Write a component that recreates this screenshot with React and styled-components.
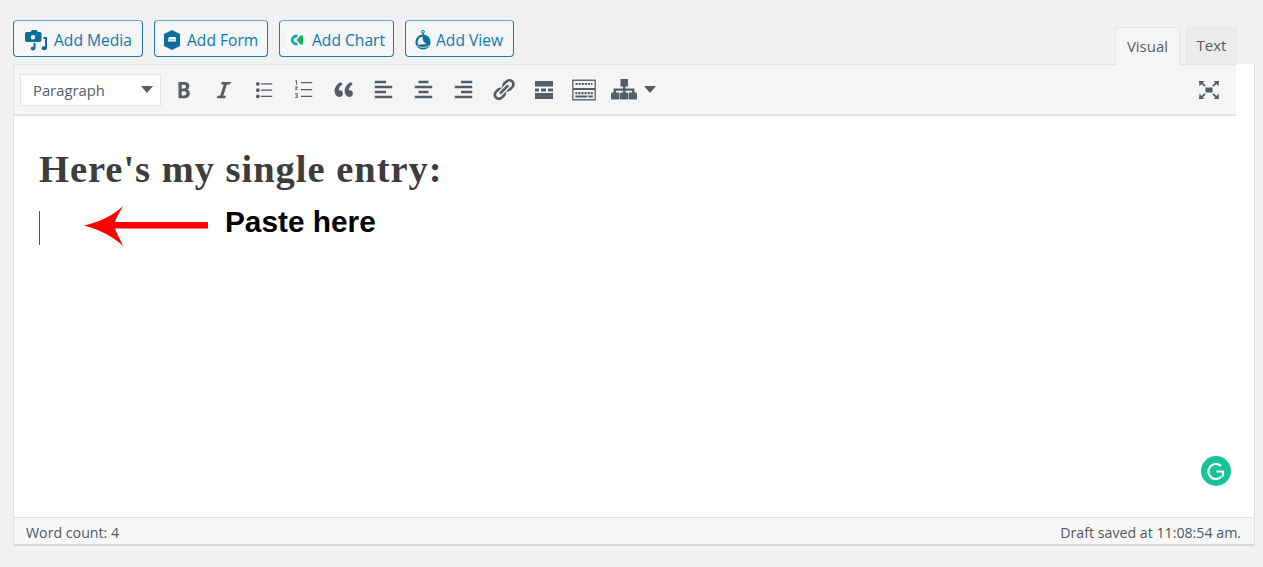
import React from "react";
import styled, { createGlobalStyle } from "styled-components";

const Global = createGlobalStyle`
  html, body { margin: 0; padding: 0; background: #f1f1f1; }
  body { font-family: "Open Sans", "Liberation Sans", sans-serif; overflow: hidden; }
`;

const Page = styled.div`
  box-sizing: border-box;
  height: 567px;
  padding: 20px 8px 0 13px;
  background: #f1f1f1;
`;

const TopRow = styled.div`
  display: flex;
  justify-content: space-between;
  align-items: flex-start;
  height: 44px;
`;

const MediaButtons = styled.div`
  display: flex;
  gap: 11px;
`;

const MediaButton = styled.button`
  box-sizing: border-box;
  display: flex;
  align-items: center;
  gap: ${(p) => p.$gap}px;
  width: ${(p) => p.$width}px;
  height: 37px;
  padding: 2px 0 0 ${(p) => p.$pad}px;
  background: #f3f5f6;
  border: 1px solid #1a7ea6;
  border-top-color: #6fa9c3;
  border-radius: 4px;
  color: #0f7ba6;
  font: 400 15.6px "Open Sans", sans-serif;
  white-space: nowrap;
`;

const Tabs = styled.div`
  display: flex;
  align-items: flex-start;
  gap: 6px;
  margin: 7px 18px 0 0;
`;

const Tab = styled.div`
  box-sizing: border-box;
  display: flex;
  align-items: center;
  justify-content: center;
  width: ${(p) => p.$width}px;
  height: ${(p) => (p.$active ? 38 : 37)}px;
  padding-bottom: 2px;
  background: ${(p) => (p.$active ? "#f5f5f5" : "#ebebeb")};
  border: 1px solid ${(p) => (p.$active ? "#e6e6e6" : "#e8e8e8")};
  border-bottom: none;
  color: #555d66;
  font-size: 15px;
  position: relative;
  z-index: 1;
`;

const Editor = styled.div`
  box-sizing: border-box;
  width: 1242px;
  height: 482px;
  display: flex;
  flex-direction: column;
  background: #fff;
  border-left: 1px solid #e2e2e2;
  border-right: 1px solid #e2e2e2;
`;

const Toolbar = styled.div`
  box-sizing: border-box;
  display: flex;
  align-items: center;
  height: 52px;
  margin-right: 18px;
  padding: 0 7px 0 6px;
  background: #f5f5f5;
  border-top: 1px solid #e4e4e4;
  border-bottom: 2px solid #e6e6e6;
`;

const FormatSelect = styled.div`
  box-sizing: border-box;
  display: flex;
  align-items: center;
  justify-content: space-between;
  width: 141px;
  height: 32px;
  margin-right: 2.5px;
  padding: 0 7px 0 12px;
  background: #fff;
  border: 1px solid #e3e3e3;
  color: #555d66;
  font-size: 14.8px;
`;

const Caret = styled.span`
  width: 0;
  height: 0;
  border-left: 6px solid transparent;
  border-right: 6px solid transparent;
  border-top: 7px solid #555d66;
`;

const ToolButton = styled.div`
  display: flex;
  align-items: center;
  justify-content: center;
  width: 40px;
  height: 40px;
  color: #555d66;
`;

const Spacer = styled.div`
  flex: 1;
`;

const Content = styled.div`
  position: relative;
  flex: 1;
  padding: 30px 0 0 25px;
`;

const Heading = styled.h2`
  margin: 0;
  color: #3d3d3d;
  font: 700 38.5px/46px "Liberation Serif", serif;
  letter-spacing: 0.98px;
  white-space: nowrap;
`;

const PasteRow = styled.div`
  display: flex;
  align-items: flex-start;
  margin-top: 19px;
`;

const TextCursor = styled.div`
  width: 1px;
  height: 34px;
  background: #555;
`;

const ArrowSvg = styled.svg`
  margin: -5px 0 0 44px;
  flex: none;
`;

const PasteNote = styled.div`
  margin: -6px 0 0 17px;
  color: #000;
  font: 700 29.8px/34px "Liberation Sans", sans-serif;
`;

const GrammarlyBadge = styled.svg`
  position: absolute;
  right: 23px;
  bottom: 31px;
`;

const StatusBar = styled.div`
  box-sizing: border-box;
  display: flex;
  justify-content: space-between;
  align-items: center;
  height: 29px;
  padding: 2px 13px 0 12px;
  background: #f7f7f7;
  border-top: 1px solid #e2e2e2;
  border-bottom: 2px solid #d8d8d8;
  color: #50575e;
  font-size: 14.2px;
`;

const Ic = ({ d, size = 25, children }) => (
  <svg width={size} height={size} viewBox="0 0 20 20" fill="currentColor">
    {d && <path d={d} />}
    {children}
  </svg>
);

const icons = {
  bold: "M6 4v13h4.54c1.37 0 2.46-.33 3.26-1 .8-.66 1.2-1.58 1.2-2.77 0-.84-.17-1.51-.51-2.01s-.9-.85-1.67-1.03v-.09c.57-.1 1.02-.4 1.36-.9s.51-1.13.51-1.91c0-1.14-.39-1.98-1.17-2.5C12.75 4.26 11.5 4 9.78 4H6zm2.57 5.15V6.26h1.36c.73 0 1.27.11 1.61.32.34.22.51.58.51 1.07 0 .54-.16.92-.47 1.15s-.82.35-1.51.35h-2zm0 2.19h1.6c1.44 0 2.16.53 2.16 1.61 0 .6-.17 1.05-.51 1.34s-.86.43-1.57.43H8.57v-3.38z",
  italic: "M14.78 6h-2.13l-2.8 9h2.12l-.62 2H4.6l.62-2h2.14l2.8-9H8.03l.62-2h7.75z",
  ul: "M5.5 7C4.67 7 4 6.33 4 5.5 4 4.68 4.67 4 5.5 4 6.32 4 7 4.68 7 5.5 7 6.33 6.32 7 5.5 7zM8 5h9v1H8V5zm-2.5 7c-.83 0-1.5-.67-1.5-1.5C4 9.68 4.67 9 5.5 9c.82 0 1.5.68 1.5 1.5 0 .83-.68 1.5-1.5 1.5zM8 10h9v1H8v-1zm-2.5 7c-.83 0-1.5-.67-1.5-1.5 0-.82.67-1.5 1.5-1.5.82 0 1.5.68 1.5 1.5 0 .83-.68 1.5-1.5 1.5zM8 15h9v1H8v-1z",
  quote: "M9.49 13.22c0-.74-.2-1.38-.61-1.9-.62-.78-1.83-.88-2.53-.72-.29-1.65 1.11-3.75 2.92-4.65L7.88 4c-2.73 1.3-5.42 4.28-4.96 8.05C3.21 14.43 4.59 16 6.54 16c.85 0 1.56-.25 2.12-.76s.83-1.18.83-2.02zm8.05 0c0-.74-.2-1.38-.61-1.9-.63-.78-1.83-.88-2.53-.72-.29-1.65 1.11-3.75 2.92-4.65L15.93 4c-2.73 1.3-5.41 4.28-4.95 8.05.29 2.38 1.66 3.95 3.61 3.95.85 0 1.56-.25 2.12-.76s.83-1.18.83-2.02z",
  left: "M12 5V3H3v2h9zm5 4V7H3v2h14zm-5 4v-2H3v2h9zm5 4v-2H3v2h14z",
  center: "M14 5V3H6v2h8zm3 4V7H3v2h14zm-3 4v-2H6v2h8zm3 4v-2H3v2h14z",
  right: "M17 5V3H8v2h9zm0 4V7H3v2h14zm0 4v-2H8v2h9zm0 4v-2H3v2h14z",
  link: "M17.74 2.76c1.68 1.69 1.68 4.41 0 6.1l-1.53 1.52c-1.12 1.12-2.7 1.47-4.14 1.09l2.62-2.61.76-.77.76-.76c.84-.84.84-2.2 0-3.04-.84-.85-2.2-.85-3.04 0l-.77.76-3.38 3.38c-.37-1.44-.02-3.02 1.1-4.14l1.52-1.53c1.69-1.68 4.42-1.68 6.1 0zM8.59 13.43l5.34-5.34c.42-.42.42-1.1 0-1.52-.44-.43-1.13-.39-1.53 0l-5.33 5.34c-.42.42-.42 1.1 0 1.52.44.43 1.13.39 1.52 0zm-.76 2.29l4.14-4.15c.38 1.44.03 3.02-1.09 4.14l-1.52 1.53c-1.69 1.68-4.41 1.68-6.1 0-1.68-1.68-1.68-4.42 0-6.1l1.53-1.52c1.12-1.12 2.7-1.47 4.14-1.1l-4.14 4.15c-.85.84-.85 2.2 0 3.05.84.84 2.2.84 3.04 0z",
};

const OrderedIcon = () => (
  <Ic>
    <path d="M8 4h9v1H8zM8 9.500h9v1H8zM8 15h9v1H8z" />
    <path d="M3.600 2.500h1.200v3.600h-.8V3.400l-.6.300zM3.200 7.600h2.200v.7L4.200 9.500h1.300v.7H3.200v-.7l1.300-1.200H3.200zM3.200 13h2.200v3.800H3.200v-.7h1.400v-.8H3.700v-.6h.9v-.9H3.200z" />
  </Ic>
);

const MoreIcon = () => (
  <svg width="18" height="18" viewBox="0 0 18 18" fill="currentColor">
    <path d="M0 0h18v5.500H0zM0 12h18v6H0zM0 7.500h4v3H0zM6 7.500h5v3H6zM13 7.500h5v3h-5z" />
  </svg>
);

const KitchenIcon = () => (
  <Ic size={28}>
    <path fillRule="evenodd" d="M1.500 2.500h17v15h-17zM2.500 3.500v5h15v-5zM2.500 10v6.500h15V10z" opacity=".9" />
    <path d="M2 9h16v1H2zM4 5h1.500v1.500H4zM6.200 5h1.500v1.500H6.200zM8.400 5h1.500v1.500H8.400zM10.600 5h1.500v1.500h-1.500zM12.800 5h1.500v1.500h-1.500zM15 5h1v1.500h-1zM3.800 11.500h1.500V13H3.800zM6 11.500h1.500V13H6zM8.200 11.500h1.500V13H8.200zM10.400 11.500h1.500V13h-1.500zM12.600 11.500h1.500V13h-1.500zM14.800 11.500h1.500V13h-1.500zM3.800 14h8.500v1.400H3.800zM13 14h3.300v1.400H13z" />
  </Ic>
);

const HierarchyIcon = () => (
  <svg width="26" height="21" viewBox="0 0 26 21" fill="currentColor">
    <path d="M9.500 0h7.500v7.500h-2.500v2H23.500V14h-2.500v-2.200h-6.500V14h-2.500v-2.200H5V14H2.500V9.500h9.500v-2H9.500z" />
    <rect x="0" y="13.500" width="8.500" height="7" rx="1.200" />
    <rect x="9" y="13.500" width="8" height="7" rx="1.200" />
    <rect x="17.500" y="13.500" width="8.500" height="7" rx="1.200" />
  </svg>
);

const FullscreenArrow = "M1 1h5.500L4.700 2.800l3 2.800-1.200 1.200-3-2.800L1.500 6.500z";

const FullscreenIcon = () => (
  <svg width="22" height="20" viewBox="0 0 22 20" fill="currentColor">
    <rect x="7.500" y="7.500" width="7" height="5" />
    <path d={FullscreenArrow} />
    <path d={FullscreenArrow} transform="matrix(-1 0 0 1 22 0)" />
    <path d={FullscreenArrow} transform="matrix(1 0 0 -1 0 20)" />
    <path d={FullscreenArrow} transform="matrix(-1 0 0 -1 22 20)" />
  </svg>
);

const MediaIcon = () => (
  <svg width="24" height="24" viewBox="0 0 24 24" fill="#0a6f9b">
    <path fillRule="evenodd" d="M3 4h3.500L8 2h4.500L14 4h1.500c1 0 2 .6 2 1.500V12c0 1-1 2-2 2H3c-1 0-2-1-2-2V5.500C1 4.600 2 4 3 4zm6 3a2.300 2.300 0 100 4.600A2.300 2.300 0 009 7z" />
    <path d="M11.500 15v4.800c0 1.500-1 2.600-2.500 2.600-1.300 0-2.300-.8-2.300-1.900 0-1.200 1.400-2 2.800-1.600V15zM19.500 9h3.500v10.500c0 1.700-1.200 2.800-2.800 2.800-1.400 0-2.600-.8-2.600-2 0-1.300 1.500-2.300 3.400-1.800V11h-1.500z" />
  </svg>
);

const FormIcon = () => (
  <svg width="18" height="20" viewBox="0 0 18 20">
    <path fill="#0a6f9b" d="M9 0l8 4v12l-8 4-8-4V4z" />
    <path fill="#fff" d="M5.800 7h7l.2 4.500H5z" />
    <path fill="#a9c8d8" d="M6 9h6.500v1.500H6z" />
  </svg>
);

const ChartIcon = () => (
  <svg width="20" height="16" viewBox="0 0 20 16">
    <rect width="20" height="16" rx="1" fill="#fbfcfc" />
    <path fill="none" stroke="#17a7b5" strokeWidth="2.800" d="M10.500 4.200a4 4 0 100 7.600" />
    <path fill="#1bb35a" d="M9.500 8l4-4.500h2.500v9h-2.500z" />
  </svg>
);

const ViewIcon = () => (
  <svg width="16" height="20" viewBox="0 0 16 20">
    <circle cx="8" cy="1.800" r="1.400" fill="none" stroke="#0a6f9b" />
    <rect x="7.300" y="3" width="1.400" height="2" fill="#0a6f9b" />
    <circle cx="8" cy="12" r="7.600" fill="#0a6f9b" />
    <path fill="#f3f5f6" d="M7.500 6.500c-3 .5-5 3-5 5.500 0 1 .3 2 .8 2.800l8.700-.8c-2.500-.5-4.500-3-4.500-7.500z" />
    <path fill="none" stroke="#f3f5f6" strokeWidth=".8" d="M2 15.500c3 2.500 9 2.500 12 0" />
  </svg>
);

const mediaButtons = [
  { label: "Add Media", width: 130, pad: 10, gap: 6, icon: <MediaIcon /> },
  { label: "Add Form", width: 114, pad: 8, gap: 6, icon: <FormIcon /> },
  { label: "Add Chart", width: 115, pad: 7, gap: 5, icon: <ChartIcon /> },
  { label: "Add View", width: 109, pad: 9, gap: 5, icon: <ViewIcon /> },
];

const toolButtons = [
  <Ic d={icons.bold} />, <Ic d={icons.italic} />, <Ic d={icons.ul} />, <OrderedIcon />,
  <Ic d={icons.quote} />, <Ic d={icons.left} />, <Ic d={icons.center} />, <Ic d={icons.right} />,
  <Ic d={icons.link} />, <MoreIcon />, <KitchenIcon />, <HierarchyIcon />,
];

export default function App() {
  return (
    <>
      <Global />
      <Page>
        <TopRow>
          <MediaButtons>
            {mediaButtons.map((b) => (
              <MediaButton key={b.label} $width={b.width} $pad={b.pad} $gap={b.gap}>
                {b.icon}
                {b.label}
              </MediaButton>
            ))}
          </MediaButtons>
          <Tabs>
            <Tab $active $width={65}>Visual</Tab>
            <Tab $width={51}>Text</Tab>
          </Tabs>
        </TopRow>
        <Editor>
          <Toolbar>
            <FormatSelect>
              Paragraph
              <Caret />
            </FormatSelect>
            {toolButtons.map((icon, i) => (
              <ToolButton key={i}>{icon}</ToolButton>
            ))}
            <Caret />
            <Spacer />
            <ToolButton>
              <FullscreenIcon />
            </ToolButton>
          </Toolbar>
          <Content>
            <Heading>Here's my single entry:</Heading>
            <PasteRow>
              <TextCursor />
              <ArrowSvg width="124" height="40" viewBox="0 0 124 40">
                <path fill="#ff0000" d="M0 19.500C16 16 30 9 39 0c-3 6-7 12-8 16h93v6.500H31c1 4 5 10 8 17.500C30 31 16 24 0 19.500z" />
              </ArrowSvg>
              <PasteNote>Paste here</PasteNote>
            </PasteRow>
            <GrammarlyBadge width="30" height="30" viewBox="0 0 30 30">
              <circle cx="15" cy="15" r="15" fill="#15c39a" />
              <path fill="none" stroke="#fff" strokeWidth="2.200" d="M20 10a7.500 7.500 0 10.500 10.500" />
              <path fill="none" stroke="#fff" strokeWidth="2.200" d="M15.500 15.500H22v5" />
            </GrammarlyBadge>
          </Content>
          <StatusBar>
            <span>Word count: 4</span>
            <span>Draft saved at 11:08:54 am.</span>
          </StatusBar>
        </Editor>
      </Page>
    </>
  );
}
